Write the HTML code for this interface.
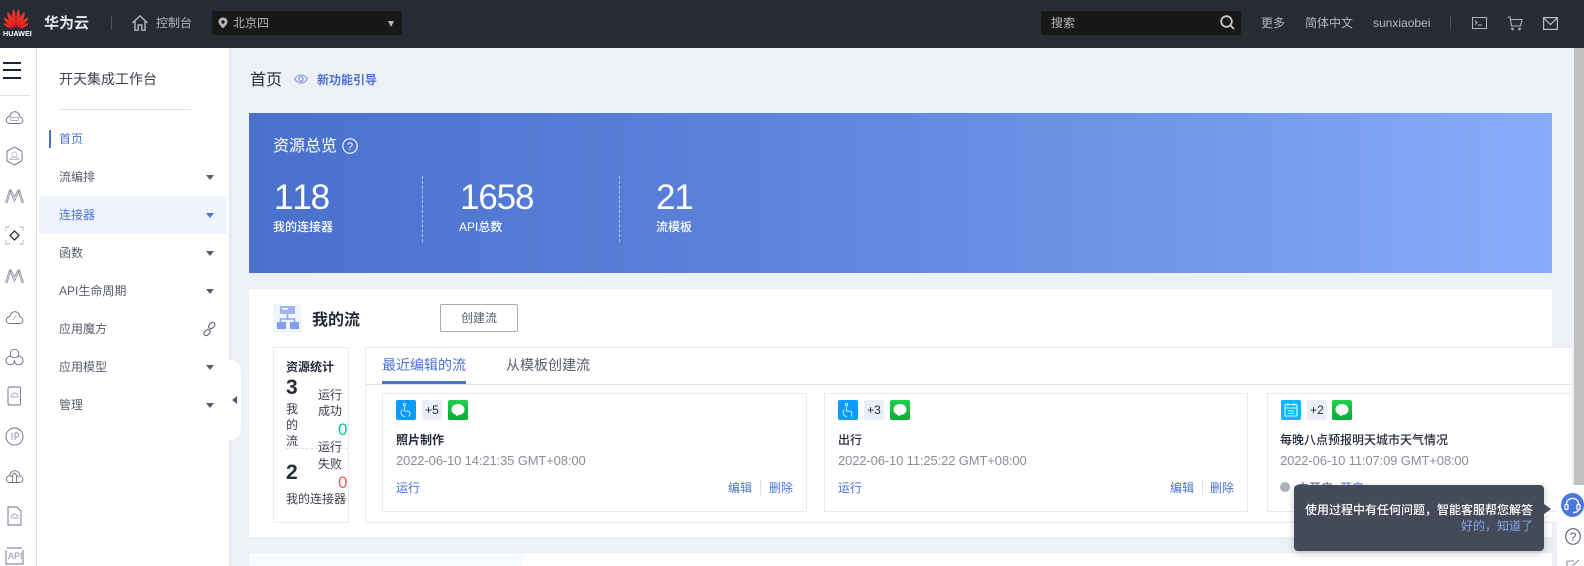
<!DOCTYPE html>
<html lang="zh"><head><meta charset="utf-8"><title>首页</title>
<style>
*{box-sizing:border-box}
html,body{margin:0;padding:0;width:1584px;height:566px;overflow:hidden;background:#edf0f5}
body{position:relative;font-family:"Liberation Sans","Noto Sans CJK SC",sans-serif;font-size:12px;color:#252b3a}
.a{position:absolute}
.t{position:absolute;white-space:nowrap;line-height:18px;height:18px}
svg{position:absolute;overflow:visible}
.menu{position:absolute;left:59px;color:#575d6c;line-height:18px;white-space:nowrap}
.tri{position:absolute;width:0;height:0;border-left:4px solid transparent;border-right:4px solid transparent;border-top:5px solid #575d6c;left:206px}
.box{position:absolute;border:1px solid #e8eaf0;background:#fff}
.sq{position:absolute;width:20px;height:20px;border-radius:2px}
.blue{color:#4a72d4}
.gray{color:#8a8e99}
.hd{color:#b4b6ba}
.num{font-size:35px;line-height:44px;height:44px;color:#fff;font-kerning:none;letter-spacing:-1.150px}
.sideic{left:5px;fill:none;stroke:#66708a;stroke-width:.9}
</style></head><body>

<!-- header -->
<div class="a" style="left:0;top:0;width:1584px;height:48px;background:#272b36"></div>
<svg style="left:3px;top:8px" width="26" height="21" viewBox="0 0 26 21">
<defs><linearGradient id="r" x1="0" y1="0" x2="0" y2="1"><stop offset="0" stop-color="#f5432a"/><stop offset="1" stop-color="#d9141c"/></linearGradient></defs>
<g fill="url(#r)">
<path d="M12.4 20 C8.5 14 8.6 6 10.2 1 C12.6 3 13.6 11 12.4 20Z"/>
<path d="M13.6 20 C17.5 14 17.4 6 15.8 1 C13.4 3 12.4 11 13.6 20Z"/>
<path d="M11.4 20 C6 15 4.2 9 4.4 4 C8 6 11 12 11.4 20Z"/>
<path d="M14.6 20 C20 15 21.8 9 21.6 4 C18 6 15 12 14.6 20Z"/>
<path d="M10.4 20 C5 17.5 1.6 13.5 .6 9.5 C4.5 10.5 9 14.5 10.4 20Z"/>
<path d="M15.6 20 C21 17.5 24.4 13.5 25.4 9.5 C21.5 10.5 17 14.5 15.6 20Z"/>
<path d="M9.5 20.5 C6 20.8 2.5 18.5 .4 15.5 C4 15.8 7.5 17.5 9.5 20.5Z"/>
<path d="M16.5 20.5 C20 20.8 23.5 18.5 25.6 15.5 C22 15.8 18.5 17.5 16.5 20.5Z"/>
</g></svg>
<div class="t" style="left:3px;top:29px;height:9px;line-height:9px;font-size:7.2px;font-weight:700;color:#fff">HUAWEI</div>
<div class="t" style="left:44px;top:14px;font-size:15px;font-weight:700;color:#e9e9ea;line-height:20px;height:20px">华为云</div>
<div class="a" style="left:111px;top:16px;width:1px;height:14px;background:#4b4f59"></div>
<svg style="left:132px;top:15px;fill:none;stroke:#b4b6ba;stroke-width:1.4" width="16" height="16" viewBox="0 0 16 16"><path d="M.6 8 8 .9 15.4 8M3 6.2V15.2H6.2V10H9.8V15.2H13V6.2"/></svg>
<div class="t hd" style="left:156px;top:14px">控制台</div>
<div class="a" style="left:212px;top:11px;width:190px;height:24px;background:#181818;border-radius:2px"></div>
<svg style="left:218px;top:17px" width="10" height="12" viewBox="0 0 10 11"><path fill="#b4b6ba" fill-rule="evenodd" d="M5 0C2.300 0 .5 1.900 .5 4.300 .5 7 5 11 5 11s4.500-4 4.500-6.700C9.500 1.900 7.700 0 5 0Zm0 2.800a1.700 1.700 0 1 1 0 3.400 1.700 1.700 0 0 1 0-3.400Z"/></svg>
<div class="t hd" style="left:233px;top:14px">北京四</div>
<div class="tri" style="left:388px;top:21px;border-top:6px solid #b4b6ba;border-left-width:3.500px;border-right-width:3.500px"></div>

<div class="a" style="left:1041px;top:11px;width:200px;height:24px;background:#181818;border-radius:2px"></div>
<div class="t hd" style="left:1051px;top:14px">搜索</div>
<svg style="left:1220px;top:15px;fill:none;stroke:#c6c7ca;stroke-width:1.800" width="15" height="15" viewBox="0 0 15 15"><circle cx="6.500" cy="6.500" r="5.300"/><path d="M10.500 10.500 14 14"/></svg>
<div class="t hd" style="left:1261px;top:14px">更多</div>
<div class="t hd" style="left:1305px;top:14px">简体中文</div>
<div class="t hd" style="left:1373px;top:14px;font-size:12px">sunxiaobei</div>
<div class="a" style="left:1450px;top:16px;width:1px;height:14px;background:#4b4f59"></div>
<svg style="left:1472px;top:17px;fill:none;stroke:#b4b6ba;stroke-width:1" width="15" height="12" viewBox="0 0 15 12"><rect x=".5" y=".5" width="14" height="11"/><path d="M3 3.500 5 5.500 3 7.500M6 8H10"/></svg>
<svg style="left:1507px;top:16px;fill:none;stroke:#b4b6ba;stroke-width:1.100" width="16" height="15" viewBox="0 0 16 15"><path d="M.5 1H3L4.500 10H13.500L15 3.500H3.500"/><circle cx="5.500" cy="13" r=".8"/><circle cx="12.500" cy="13" r=".8"/></svg>
<svg style="left:1543px;top:17px;fill:none;stroke:#c0c1c4;stroke-width:1.200" width="15" height="13" viewBox="0 0 15 13"><rect x=".6" y=".6" width="13.800" height="11.800"/><path d="M.8 1 7.500 7.500 14.200 1"/></svg>

<!-- scrollbar & right -->
<div class="a" style="left:1574px;top:48px;width:10px;height:518px;background:#c1c1c1"></div>

<!-- left icon column -->
<div class="a" style="left:0;top:48px;width:37px;height:518px;background:#fff;border-right:1px solid #dfe1e6"></div>
<div class="a" style="left:3px;top:62px;width:18px;height:2px;background:#1c2540"></div>
<div class="a" style="left:3px;top:69px;width:18px;height:2px;background:#1c2540"></div>
<div class="a" style="left:3px;top:77px;width:18px;height:2px;background:#1c2540"></div>
<div class="a" style="left:0;top:95px;width:30px;height:1px;background:#dfe1e6"></div>

<svg class="sideic" style="top:108px" width="19" height="18" viewBox="0 0 19 18"><path d="M5 15.500H14.500C19 15.500 19 9.500 14.800 9 14.500 2 5.500 2 4.800 8.500 .2 9 0 15.500 5 15.500Z"/><rect x="5.500" y="9.500" width="8" height="3" rx="1" stroke="#a8adbb"/></svg>
<svg class="sideic" style="top:146px" width="19" height="20" viewBox="0 0 19 20"><path d="M9.500 1 17 5.300V14.700L9.500 19 2 14.700V5.300Z"/><circle cx="9.500" cy="8.500" r="2.500" stroke="#b8bdc9"/><path d="M5 13.500C6 10.500 13 10.500 14 13.500Z" stroke="#b8bdc9"/></svg>
<svg class="sideic" style="top:187px;stroke:#8a90a0" width="19" height="18" viewBox="0 0 19 18"><path d="M.5 16 4.500 3 9.500 14 14.500 3 18.500 16M2 16 6 3 9.500 10 13 3 17 16"/></svg>
<svg class="sideic" style="top:226px;stroke:#b4b8c4" width="19" height="19" viewBox="0 0 19 19"><path d="M1 5V1H5M14 1H18V5M18 14V18H14M5 18H1V14"/><path stroke="#1b2540" stroke-width="1.200" d="M9.500 5 14 9.500 9.500 14 5 9.500Z"/></svg>
<svg class="sideic" style="top:267px;stroke:#8a90a0" width="19" height="18" viewBox="0 0 19 18"><path d="M.5 16 4.500 3 9.500 14 14.500 3 18.500 16M2 16 6 3 9.500 10 13 3 17 16"/></svg>
<svg class="sideic" style="top:308px" width="19" height="18" viewBox="0 0 19 18"><path d="M5 15.500H14.500C19 15.500 19 9.500 14.800 9 14.500 2 5.500 2 4.800 8.500 .2 9 0 15.500 5 15.500Z"/><path d="M7.500 12 11.500 7" stroke="#a8adbb"/></svg>
<svg class="sideic" style="top:348px" width="19" height="18" viewBox="0 0 19 18"><circle cx="9.500" cy="5.500" r="4.300"/><path d="M6 8.300A4.300 4.300 0 1 0 9.500 12 4.300 4.300 0 1 0 13 8.300"/></svg>
<svg class="sideic" style="top:386px" width="19" height="20" viewBox="0 0 19 20"><rect x="3" y="1" width="12.500" height="18" rx="1.500"/><path d="M6.500 11H12C13.500 11 13.500 8.500 12 8.500 11.500 6.500 8 6.500 7.500 8.500 5.500 8.500 5.500 11 6.500 11Z" stroke="#a8adbb"/></svg>
<svg class="sideic" style="top:427px" width="19" height="19" viewBox="0 0 19 19"><circle cx="9.500" cy="9.500" r="8.500"/><path stroke="#8a90a0" d="M7 6V13M10 13V6H12C14 6 14 10 12 10H10"/></svg>
<svg class="sideic" style="top:467px" width="19" height="18" viewBox="0 0 19 18"><path d="M5 15.500H14.500C19 15.500 19 9.500 14.800 9 14.500 2 5.500 2 4.800 8.500 .2 9 0 15.500 5 15.500Z"/><path d="M5.500 10 9.500 6 13.500 10M7.500 9V15.500M11.500 9V15.500" stroke="#66708a"/></svg>
<svg class="sideic" style="top:506px" width="19" height="20" viewBox="0 0 19 20"><path d="M3 1H12L16 5V19H3Z"/><path d="M6.500 12H12C13.500 12 13.500 9.500 12 9.500 11.500 7.500 8 7.500 7.500 9.500 5.500 9.500 5.500 12 6.500 12Z" stroke="#a8adbb"/></svg>
<svg class="sideic" style="top:547px" width="19" height="19" viewBox="0 0 19 19"><path d="M2 1H17M1 3V17H18V3"/></svg>
<div class="t" style="left:8px;top:549px;font-size:9px;color:#8a90a0;height:14px;line-height:14px">API</div>

<!-- second sidebar -->
<div class="a" style="left:37px;top:48px;width:192px;height:518px;background:#fff;box-shadow:1px 0 3px rgba(30,40,70,.08)"></div>
<div class="t" style="left:59px;top:69px;font-size:14px;color:#3b404d;line-height:20px;height:20px">开天集成工作台</div>
<div class="a" style="left:59px;top:109px;width:132px;height:1px;background:#dfe1e6"></div>
<div class="a" style="left:49px;top:130px;width:2px;height:18px;background:#4a72d4"></div>
<div class="a" style="left:39px;top:196px;width:188px;height:38px;background:#f0f4fc"></div>
<div class="menu blue" style="top:130px">首页</div>
<div class="menu" style="top:168px">流编排</div><div class="tri" style="top:175px"></div>
<div class="menu blue" style="top:206px">连接器</div><div class="tri" style="top:213px;border-top-color:#4a72d4"></div>
<div class="menu" style="top:244px">函数</div><div class="tri" style="top:251px"></div>
<div class="menu" style="top:282px">API生命周期</div><div class="tri" style="top:289px"></div>
<div class="menu" style="top:320px">应用魔方</div>
<svg style="left:203px;top:323px;fill:none;stroke:#575d6c;stroke-width:1.100" width="13" height="13" viewBox="0 0 13 13"><rect x="6.500" y="-1" width="4.500" height="7" rx="2.200" transform="rotate(45 8.700 2.500)"/><rect x="1.800" y="6" width="4.500" height="7" rx="2.200" transform="rotate(45 4 9.500)"/></svg>
<div class="menu" style="top:358px">应用模型</div><div class="tri" style="top:365px"></div>
<div class="menu" style="top:396px">管理</div><div class="tri" style="top:403px"></div>
<div class="a" style="left:229px;top:360px;width:12px;height:80px;background:#fff;border-radius:0 10px 10px 0"></div>
<div class="a" style="left:232px;top:396px;width:0;height:0;border-top:4px solid transparent;border-bottom:4px solid transparent;border-right:5px solid #575d6c"></div>

<!-- title -->
<div class="t" style="left:250px;top:70px;font-size:16px;color:#252b3a;line-height:22px;height:22px">首页</div>
<svg style="left:294px;top:74px;fill:none;stroke:#8ea6e2;stroke-width:1.300" width="14" height="10" viewBox="0 0 14 10"><path d="M.7 5C4 -.300 10 -.300 13.300 5 10 10.300 4 10.300 .7 5Z"/><circle cx="7" cy="5" r="2.200" stroke-width="1.500"/></svg>
<div class="t" style="left:317px;top:71px;font-weight:700;color:#4a72d4">新功能引导</div>

<!-- hero -->
<div class="a" style="left:249px;top:113px;width:1303px;height:160px;background:linear-gradient(90deg,#4971cb 0%,#5a80da 35%,#7097e8 70%,#8aabfa 100%)"></div>
<div class="t" style="left:273px;top:136px;font-size:16px;color:#fff;line-height:22px;height:22px">资源总览</div>
<svg style="left:342px;top:138px" width="16" height="16" viewBox="0 0 16 16"><circle cx="8" cy="8" r="7.200" fill="none" stroke="#fff" stroke-width="1.100"/><text x="8" y="12" font-size="11" text-anchor="middle" fill="#fff" font-family="Liberation Sans">?</text></svg>
<div class="t num" style="left:274px;top:176px">118</div>
<div class="t num" style="left:460px;top:176px">1658</div>
<div class="t num" style="left:656px;top:176px">21</div>
<div class="t" style="left:273px;top:218px;color:#fff;font-weight:500">我的连接器</div>
<div class="t" style="left:459px;top:218px;color:#fff;font-weight:500">API总数</div>
<div class="t" style="left:656px;top:218px;color:#fff;font-weight:500">流模板</div>
<div class="a" style="left:422px;top:176px;height:66px;border-left:1px dashed #a9c0f2"></div>
<div class="a" style="left:619px;top:176px;height:66px;border-left:1px dashed #a9c0f2"></div>

<!-- my flow section -->
<div class="a" style="left:249px;top:289px;width:1303px;height:248px;background:#fff"></div>
<div class="a" style="left:273px;top:304px;width:29px;height:29px;background:#f1f5fc"></div>
<svg style="left:277px;top:306px" width="23" height="24" viewBox="0 0 23 24"><rect x="3" y="0" width="15" height="8" fill="#9db4f0"/><path d="M10.500 8V13M3.500 18V13H17.500V18" stroke="#8ba6ee" stroke-width="1.600" fill="none"/><rect x="0" y="16" width="9" height="7" fill="#7f9eec"/><rect x="13" y="16" width="9" height="7" fill="#7f9eec"/><rect x="5" y="2" width="6" height="1.500" fill="#fff"/></svg>
<div class="t" style="left:312px;top:310px;font-size:16px;font-weight:700;color:#252b3a;line-height:22px;height:22px">我的流</div>
<div class="a" style="left:440px;top:304px;width:78px;height:28px;border:1px solid #a9abb2;border-radius:2px;text-align:center;line-height:26px;color:#575d6c">创建流</div>

<!-- stats -->
<div class="box" style="left:273px;top:347px;width:76px;height:176px"></div>
<div class="t" style="left:286px;top:358px;font-weight:700">资源统计</div>
<div class="t" style="left:286px;top:376px;font-size:21px;font-weight:700;line-height:24px;height:24px">3</div>
<div class="t" style="left:286px;top:400px;color:#3b404d">我</div>
<div class="t" style="left:286px;top:416px;color:#3b404d">的</div>
<div class="t" style="left:286px;top:432px;color:#3b404d">流</div>
<div class="t" style="left:318px;top:386px;color:#3b404d">运行</div>
<div class="t" style="left:318px;top:402px;color:#3b404d">成功</div>
<div class="t" style="left:338px;top:419px;font-size:17px;color:#00c7a0;line-height:22px;height:22px">0</div>
<div class="a" style="left:286px;top:448px;width:62px;border-top:1px dashed #dfe1e6"></div>
<div class="t" style="left:318px;top:438px;color:#3b404d">运行</div>
<div class="t" style="left:318px;top:455px;color:#3b404d">失败</div>
<div class="t" style="left:338px;top:472px;font-size:17px;color:#f55a5a;line-height:22px;height:22px">0</div>
<div class="t" style="left:286px;top:461px;font-size:21px;font-weight:700;line-height:24px;height:24px">2</div>
<div class="t" style="left:286px;top:490px;color:#3b404d">我的连接器</div>

<!-- tabs panel -->
<div class="a" style="left:365px;top:347px;width:1207px;height:176px;background:#fff;border:1px solid #e8eaf0;border-right:0"></div>
<div class="a" style="left:366px;top:384px;width:1206px;height:1px;background:#dfe1e6"></div>
<div class="t" style="left:382px;top:355px;font-size:14px;color:#4a72d4;line-height:20px;height:20px">最近编辑的流</div>
<div class="a" style="left:382px;top:381px;width:84px;height:3px;background:#4a72d4"></div>
<div class="t" style="left:506px;top:355px;font-size:14px;color:#575d6c;line-height:20px;height:20px">从模板创建流</div>

<!-- card 1 -->
<div class="box" style="left:382px;top:393px;width:425px;height:119px"></div>
<div class="sq" style="left:396px;top:400px;background:#0a9bfb"></div>
<svg style="left:396px;top:400px;fill:none;stroke:#d9f0ff;stroke-width:.9" width="20" height="20" viewBox="0 0 20 20"><circle cx="8.500" cy="4.500" r="1.300"/><path d="M8.500 6.500V11L13 11.500C14.500 12 14 15 13 16.500"/><path d="M6.500 9.500C3.500 12 5.500 16.500 9 16.500"/></svg>
<div class="sq" style="left:422px;top:400px;background:#e9eef9;text-align:center;line-height:20px;color:#252b3a">+5</div>
<div class="sq" style="left:448px;top:400px;background:linear-gradient(#20d04a,#06ad32)"></div>
<svg style="left:448px;top:400px" width="20" height="20" viewBox="0 0 20 20"><path fill="#fff" d="M10 4C6 4 3.500 6.500 3.500 9.500S6 14.500 8 14.800L8 16.500 10.500 15C14 15 16.500 12.500 16.500 9.500S14 4 10 4Z"/></svg>
<div class="t" style="left:396px;top:431px;font-weight:700">照片制作</div>
<div class="t gray" style="left:396px;top:452px;font-size:13px;letter-spacing:-.13px">2022-06-10 14:21:35 GMT+08:00</div>
<div class="t blue" style="left:396px;top:479px">运行</div>
<div class="t blue" style="left:728px;top:479px">编辑</div>
<div class="a" style="left:760px;top:479px;width:1px;height:16px;background:#dfe1e6"></div>
<div class="t blue" style="left:769px;top:479px">删除</div>

<!-- card 2 -->
<div class="box" style="left:824px;top:393px;width:424px;height:119px"></div>
<div class="sq" style="left:838px;top:400px;background:#0a9bfb"></div>
<svg style="left:838px;top:400px;fill:none;stroke:#d9f0ff;stroke-width:.9" width="20" height="20" viewBox="0 0 20 20"><circle cx="8.500" cy="4.500" r="1.300"/><path d="M8.500 6.500V11L13 11.500C14.500 12 14 15 13 16.500"/><path d="M6.500 9.500C3.500 12 5.500 16.500 9 16.500"/></svg>
<div class="sq" style="left:864px;top:400px;background:#e9eef9;text-align:center;line-height:20px;color:#252b3a">+3</div>
<div class="sq" style="left:890px;top:400px;background:linear-gradient(#20d04a,#06ad32)"></div>
<svg style="left:890px;top:400px" width="20" height="20" viewBox="0 0 20 20"><path fill="#fff" d="M10 4C6 4 3.500 6.500 3.500 9.500S6 14.500 8 14.800L8 16.500 10.500 15C14 15 16.500 12.500 16.500 9.500S14 4 10 4Z"/></svg>
<div class="t" style="left:838px;top:431px;font-weight:500">出行</div>
<div class="t gray" style="left:838px;top:452px;font-size:13px;letter-spacing:-.13px">2022-06-10 11:25:22 GMT+08:00</div>
<div class="t blue" style="left:838px;top:479px">运行</div>
<div class="t blue" style="left:1170px;top:479px">编辑</div>
<div class="a" style="left:1202px;top:479px;width:1px;height:16px;background:#dfe1e6"></div>
<div class="t blue" style="left:1210px;top:479px">删除</div>

<!-- card 3 -->
<div class="box" style="left:1267px;top:393px;width:305px;height:119px;border-right:0"></div>
<div class="sq" style="left:1281px;top:400px;background:#12b5fb"></div>
<svg style="left:1281px;top:400px;fill:none;stroke:#d6f2ff;stroke-width:1.100" width="20" height="20" viewBox="0 0 20 20"><rect x="4" y="4.500" width="12" height="11.500" rx="1"/><path d="M4 8H16M7 3V6M13 3V6M7 11H13M7 13.500H13"/></svg>
<div class="sq" style="left:1307px;top:400px;background:#e9eef9;text-align:center;line-height:20px;color:#252b3a">+2</div>
<div class="sq" style="left:1332px;top:400px;background:linear-gradient(#20d04a,#06ad32)"></div>
<svg style="left:1332px;top:400px" width="20" height="20" viewBox="0 0 20 20"><path fill="#fff" d="M10 4C6 4 3.500 6.500 3.500 9.500S6 14.500 8 14.800L8 16.500 10.500 15C14 15 16.500 12.500 16.500 9.500S14 4 10 4Z"/></svg>
<div class="t" style="left:1280px;top:431px;font-weight:500">每晚八点预报明天城市天气情况</div>
<div class="t gray" style="left:1280px;top:452px;font-size:13px;letter-spacing:-.13px">2022-06-10 11:07:09 GMT+08:00</div>
<div class="a" style="left:1280px;top:482px;width:10px;height:10px;border-radius:50%;background:#adb0b8"></div>
<div class="t" style="left:1297px;top:479px;color:#575d6c">未开启</div>
<div class="t blue" style="left:1340px;top:479px">开启</div>

<!-- section 2 -->
<div class="a" style="left:249px;top:553px;width:1303px;height:13px;background:#fff"></div>
<div class="a" style="left:249px;top:553px;width:274px;height:13px;background:#f5fbff"></div>

<!-- widget -->
<div class="a" style="left:1557px;top:485px;width:27px;height:81px;background:#fff"></div>
<div class="a" style="left:1561px;top:493px;width:23px;height:24px;border-radius:50%;background:#4a78e0"></div>
<svg style="left:1564px;top:497px;fill:none;stroke:#fff;stroke-width:1.300" width="17" height="17" viewBox="0 0 17 17"><path d="M2.500 8V7C2.500-.500 14.500-.500 14.500 7V8"/><rect x="1" y="7.500" width="3" height="5" rx="1"/><rect x="13" y="7.500" width="3" height="5" rx="1"/><path d="M14.500 12.500C14.500 15 12 15.500 9 15.500"/></svg>
<svg style="left:1565px;top:528px" width="16" height="17" viewBox="0 0 16 17"><ellipse cx="8" cy="8.500" rx="7.300" ry="7.800" fill="none" stroke="#575d6c" stroke-width="1.100"/><text x="8" y="13" font-size="12" text-anchor="middle" fill="#575d6c" font-family="Liberation Sans">?</text></svg>
<svg style="left:1566px;top:560px;fill:none;stroke:#8a8e99;stroke-width:1.100" width="14" height="6" viewBox="0 0 14 6"><path d="M1 1V6M1 1H8M13 0 6 6"/></svg>

<!-- tooltip -->
<div class="a" style="left:1294px;top:485px;width:250px;height:66px;background:#444a58;border-radius:4px;box-shadow:0 2px 8px rgba(30,40,60,.25)"></div>
<div class="a" style="left:1544px;top:504px;width:0;height:0;border-top:5px solid transparent;border-bottom:5px solid transparent;border-left:7px solid #444a58"></div>
<div class="t" style="right:51px;top:501px;color:#fff;font-weight:500">使用过程中有任何问题，智能客服帮您解答</div>
<div class="t" style="right:51px;top:517px;color:#85a5ef">好的，知道了</div>

</body></html>
